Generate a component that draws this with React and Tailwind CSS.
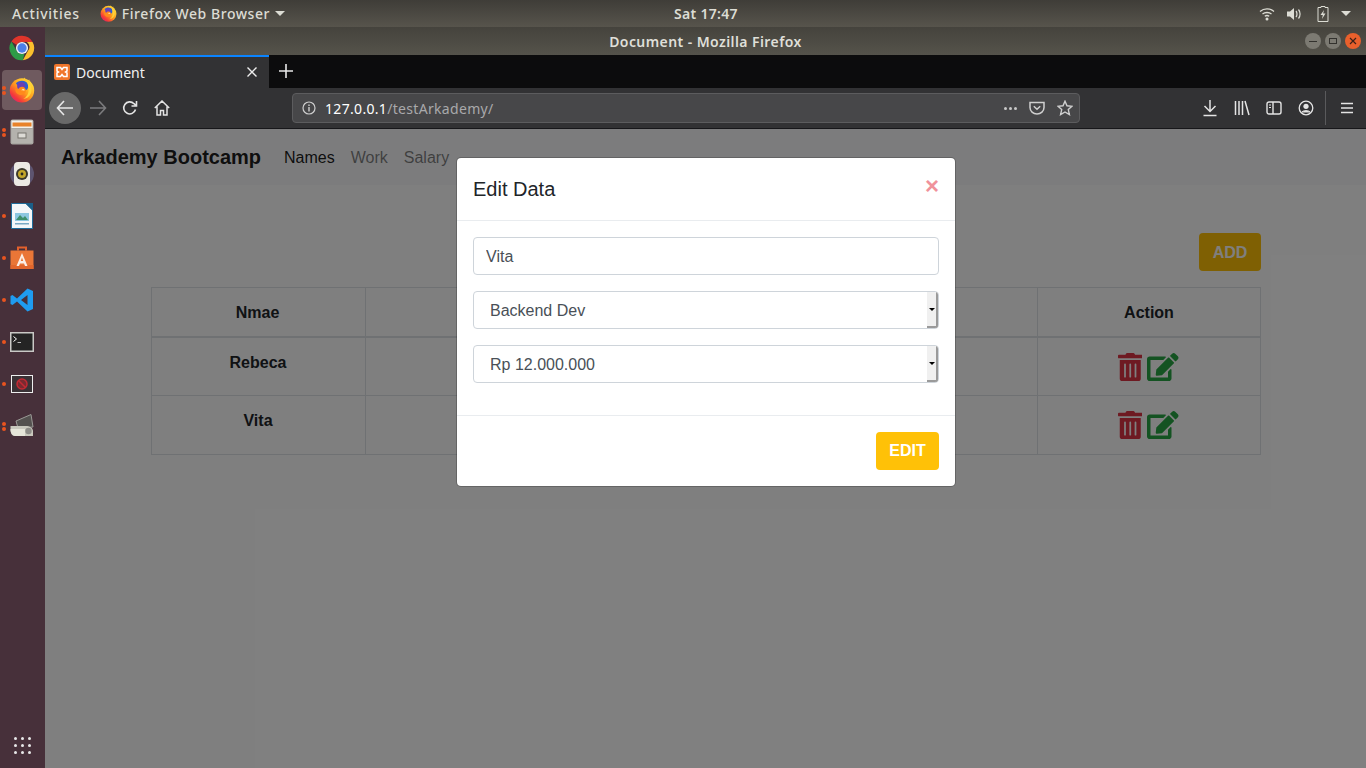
import React from "react";
import { FaTrashAlt, FaEdit } from "react-icons/fa";

const people = ["Rebeca", "Vita"];

// Small firefox logo, used in the top bar and in the dock
const FirefoxLogo = ({ size }) => (
    <svg width={size} height={size} viewBox="0 0 32 32">
        <defs>
            <linearGradient id="foxOuter" x1="0.85" y1="0.1" x2="0.15" y2="0.9">
                <stop offset="0" stopColor="#ffe03a" />
                <stop offset="0.5" stopColor="#ff9a1c" />
                <stop offset="0.85" stopColor="#f5383a" />
                <stop offset="1" stopColor="#e0256a" />
            </linearGradient>
        </defs>
        <circle cx="16" cy="16.500" r="15" fill="url(#foxOuter)" />
        <path d="M19 0.500C17.500 3 18 5 19.500 6.500L25 3 25 9Z" fill="#ffc52e" />
        <path d="M8.500 8C11 4.500 17 3.500 21 6 24.500 8.500 24.500 13.500 21.500 16L14 14Z" fill="#2d5fd0" />
        <circle cx="15" cy="11" r="5" fill="#6a3fb5" />
        <path d="M13 13C15.500 11.500 18 12 19.500 13.500 21.500 15.500 21 19 18.500 21 16 23 12 22.500 9.500 20 8 18.500 7.500 16 8 14 9.500 15.500 11.500 15.500 13 13Z" fill="#ff8a1c" />
        <path d="M17 14.500C18.500 14.500 19.500 15.500 19 17 18 16.500 17 16 15 16.500Z" fill="#ffe9a8" />
        <path d="M22 5C26.500 8 28.500 13 27.500 18 26.500 23 22.500 26.500 17.500 27 22 24.500 24.500 20 24 15 23.700 11 23 8 22 5Z" fill="#ffd23a" />
    </svg>
);

const ChromeLogo = () => (
    <svg width="26" height="26" viewBox="0 0 32 32">
        <path d="M16 1A15 15 0 0 1 29 8.500H16A7.500 7.500 0 0 0 9.500 12.200L3 8A15 15 0 0 1 16 1Z" fill="#e0352b" />
        <path d="M29 8.500A15 15 0 0 1 17 31L23 20A7.500 7.500 0 0 0 22 8.500Z" fill="#fbc02d" />
        <path d="M3 8L9.500 19.800A7.500 7.500 0 0 0 19 22.800L17 31A15 15 0 0 1 3 8Z" fill="#2e9b47" />
        <circle cx="16" cy="16" r="7.500" fill="#eef1f6" />
        <circle cx="16" cy="16" r="5.700" fill="#4c7fe8" />
    </svg>
);

const FilesIcon = () => (
    <svg width="24" height="26" viewBox="0 0 24 26">
        <rect x="0.500" y="0.500" width="23" height="25" rx="2" fill="#a9a7a2" />
        <rect x="1.500" y="1.500" width="21" height="7.500" fill="#f3f1ec" />
        <rect x="2.500" y="3.500" width="19" height="4" fill="#e8822a" />
        <rect x="1.500" y="10" width="21" height="14" fill="#b4b2ad" />
        <rect x="8" y="14" width="8" height="5" fill="#dddbd6" stroke="#77756f" />
    </svg>
);

const SpeakerIcon = () => (
    <svg width="26" height="26" viewBox="0 0 26 26">
        <circle cx="13" cy="13" r="12" fill="#5d5470" />
        <rect x="5" y="1" width="16" height="24" rx="4" fill="#eceae4" />
        <circle cx="13" cy="13" r="6" fill="#3c3a2c" />
        <circle cx="13" cy="13" r="4" fill="#c4a72a" />
        <circle cx="13" cy="13" r="1.400" fill="#2a2a22" />
    </svg>
);

const ImpressIcon = () => (
    <svg width="22" height="26" viewBox="0 0 22 26">
        <path d="M0.500 0.500H15L21.500 7V25.500H0.500Z" fill="#f4f7f9" stroke="#1f6e9c" />
        <path d="M14 0H22V8Z" fill="#1b5f88" />
        <rect x="4" y="10" width="14" height="8" fill="#8cc7e0" />
        <path d="M5 17L9 12 12 15 14 13 17 17Z" fill="#3d8f6a" />
        <rect x="4" y="20" width="14" height="1.500" fill="#79a9c4" />
    </svg>
);

const SoftwareIcon = () => (
    <svg width="24" height="24" viewBox="0 0 24 24">
        <path d="M8 4.500V1.500H16V4.500" fill="none" stroke="#e2602c" strokeWidth="2" />
        <path d="M0.500 4.500H23.500V23H0.500Z" fill="#ea7637" />
        <path d="M0.500 19H23.500V23H0.500Z" fill="#e2662c" />
        <path d="M12 7L17.500 20H15L14 17.500H10L9 20H6.500ZM12 11.500L10.800 15H13.200Z" fill="#fbeee6" fillRule="evenodd" />
    </svg>
);

const VsCodeIcon = () => (
    <svg width="24" height="24" viewBox="0 0 24 24">
        <path d="M17.500 0.500L23 3V21L17.500 23.500 7 13.500 2.500 17 0.500 16V8L2.500 7 7 10.500ZM17.500 7L11 12 17.500 17Z" fill="#1f9cf0" fillRule="evenodd" />
    </svg>
);

const TerminalIcon = () => (
    <svg width="24" height="20" viewBox="0 0 24 20">
        <rect x="0" y="0" width="24" height="20" fill="#c9c9c6" />
        <rect x="1.500" y="1.500" width="21" height="17" fill="#242424" />
        <path d="M3.500 4.500L6.500 7 3.500 9.500" fill="none" stroke="#fff" strokeWidth="1" />
        <path d="M7.500 10.500H11" stroke="#bbb" strokeWidth="1" />
    </svg>
);

const BlockedIcon = () => (
    <svg width="22" height="18" viewBox="0 0 22 18">
        <rect x="0.500" y="0.500" width="21" height="17" fill="#3a3236" stroke="#eee" />
        <circle cx="11" cy="9" r="5" fill="#7a2a30" stroke="#c22a34" strokeWidth="1.500" />
        <path d="M7.500 5.500L14.500 12.500" stroke="#c22a34" strokeWidth="1.500" />
    </svg>
);

const ScannerIcon = () => (
    <svg width="24" height="24" viewBox="0 0 24 24">
        <path d="M6 7L21 0.500 23 13 8 14Z" fill="#54514f" stroke="#9b9a96" />
        <path d="M0.500 12H16C19.500 12 23 14 23 17V22H5C2 22 0.500 19 0.500 16Z" fill="#c9c8bd" />
        <path d="M0.500 15H15V22H5C2.500 22 0.500 19 0.500 15Z" fill="#e6e5d9" />
        <circle cx="18.500" cy="17" r="3.200" fill="#8d8c87" />
    </svg>
);

const dockItems = [
    { icon: <ChromeLogo />, dots: 0 },
    { icon: <FirefoxLogo size={26} />, dots: 2, active: true },
    { icon: <FilesIcon />, dots: 2 },
    { icon: <SpeakerIcon />, dots: 0 },
    { icon: <ImpressIcon />, dots: 1 },
    { icon: <SoftwareIcon />, dots: 1 },
    { icon: <VsCodeIcon />, dots: 1 },
    { icon: <TerminalIcon />, dots: 1 },
    { icon: <BlockedIcon />, dots: 1 },
    { icon: <ScannerIcon />, dots: 2 },
];

function TopBar() {
    return (
        <div className="h-[27px] shrink-0 flex items-center justify-between bg-gradient-to-b from-[#3f3d38] to-[#57544c] text-[#dcdcd4] text-[14px] font-medium font-['Noto_Sans',sans-serif] relative">
            <div className="flex items-center">
                <span className="pl-3 tracking-[0.75px]">Activities</span>
                <span className="ml-5 mr-[5px]"><FirefoxLogo size={17} /></span>
                <span className="tracking-[0.55px]">Firefox Web Browser</span>
                <span className="ml-[5px] border-x-[5px] border-x-transparent border-t-[5px] border-t-[#dcdcd4]"></span>
            </div>
            <span className="absolute left-[674px] font-semibold tracking-[0.3px]">Sat 17:47</span>
            <div className="flex items-center pr-[15px] text-[#dcdcd4]">
                <svg width="16" height="14" viewBox="0 0 16 14" className="mr-[11px]">
                    <path d="M1 4.500C5 1 11 1 15 4.500M3.500 7C6 5 10 5 12.500 7M5.800 9.300C7 8.400 9 8.400 10.200 9.300" fill="none" stroke="currentColor" strokeWidth="1.300" />
                    <circle cx="8" cy="12" r="1.500" fill="currentColor" />
                </svg>
                <svg width="16" height="14" viewBox="0 0 16 14" className="mr-[15px]">
                    <path d="M1 4.500H4L8 1V13L4 9.500H1Z" fill="currentColor" />
                    <path d="M10 4C11.300 5.500 11.300 8.500 10 10M12.500 2.500C14.600 5 14.600 9 12.500 11.500" fill="none" stroke="currentColor" strokeWidth="1.200" />
                </svg>
                <svg width="12" height="16" viewBox="0 0 12 16" className="mr-[12px]">
                    <path d="M4 1.500V0.500H8V1.500H11V15.500H1V1.500Z" fill="none" stroke="currentColor" />
                    <path d="M7 4L3.500 9H5.800L5 13 8.500 7.500H6.200Z" fill="currentColor" />
                </svg>
                <span className="border-x-[5px] border-x-transparent border-t-[5px] border-t-[#dcdcd4]"></span>
            </div>
        </div>
    );
}

function Dock() {
    return (
        <div className="w-[45px] shrink-0 flex flex-col items-center bg-[#47303a] pt-[1px] pr-[1px] pb-[14px]">
            {dockItems.map((item, i) => (
                <div key={i} className={`w-[40px] h-[40px] mb-[2px] relative flex items-center justify-center rounded-[4px] ${item.active ? "bg-[#6f5a5f]" : ""}`}>
                    {item.icon}
                    {item.dots > 0 && (
                        <div className="absolute left-0 top-0 bottom-0 flex flex-col justify-center gap-[1px]">
                            {Array.from({ length: item.dots }).map((_, d) => (
                                <span key={d} className="w-[4px] h-[4px] rounded-full bg-[#e9541f]"></span>
                            ))}
                        </div>
                    )}
                </div>
            ))}
            <div className="mt-auto grid grid-cols-3 gap-[4px]">
                {Array.from({ length: 9 }).map((_, i) => (
                    <span key={i} className="w-[3px] h-[3px] rounded-full bg-[#e8e8e8]"></span>
                ))}
            </div>
        </div>
    );
}

function WindowButtons() {
    return (
        <div className="absolute right-[5px] top-[6px] flex gap-[4px]">
            <span className="w-[16px] h-[16px] rounded-full bg-[#7c7a72] flex items-center justify-center">
                <span className="w-[8px] h-[1px] bg-[#33322e]"></span>
            </span>
            <span className="w-[16px] h-[16px] rounded-full bg-[#7c7a72] flex items-center justify-center">
                <span className="w-[8px] h-[6px] border border-[#33322e]"></span>
            </span>
            <span className="w-[16px] h-[16px] rounded-full bg-[#e9602c] flex items-center justify-center">
                <svg width="8" height="8" viewBox="0 0 8 8"><path d="M1 1L7 7M7 1L1 7" stroke="#3a2018" strokeWidth="1.200" /></svg>
            </span>
        </div>
    );
}

function BrowserChrome() {
    return (
        <div className="shrink-0 font-['Noto_Sans',sans-serif]">
            <div className="h-[28px] relative flex items-center justify-center bg-gradient-to-b from-[#45433d] to-[#55534b] text-[#dfdfd8] text-[14px] font-semibold tracking-[0.42px]">
                Document - Mozilla Firefox
                <WindowButtons />
            </div>
            <div className="h-[33px] flex bg-[#0c0c0d] text-white">
                <div className="w-[224px] flex items-center bg-[#323234] border-t-2 border-[#0a84ff] pl-[9px] pr-[11px] pb-[1px]">
                    <span className="w-[16px] h-[16px] rounded-[2px] bg-[#f0762b] flex items-center justify-center">
                        <svg width="12" height="12" viewBox="0 0 12 12">
                            <path d="M1 1.500H4.500L6 3.500 7.500 1.500H11V5L9.500 6 11 7V10.500H7.500L6 8.500 4.500 10.500H1V7L2.500 6 1 5Z" fill="none" stroke="#fff" strokeWidth="1.500" />
                        </svg>
                    </span>
                    <span className="ml-[6px] text-[14px] text-[#f0f0f0] flex-1">Document</span>
                    <svg width="12" height="12" viewBox="0 0 12 12"><path d="M1.500 1.500L10.500 10.500M10.500 1.500L1.500 10.500" stroke="#eee" strokeWidth="1.400" /></svg>
                </div>
                <div className="w-[34px] pb-[2px] flex items-center justify-center">
                    <svg width="14" height="14" viewBox="0 0 14 14"><path d="M7 0V14M0 7H14" stroke="#e8e8e8" strokeWidth="1.600" /></svg>
                </div>
            </div>
            <div className="h-[41px] flex items-center bg-[#323234] border-b border-[#17171a] text-[#e4e4e4]">
                <div className="w-[32px] h-[32px] ml-[4px] rounded-full bg-[#696969] flex items-center justify-center">
                    <svg width="18" height="16" viewBox="0 0 18 16"><path d="M1.500 8H17M8 1L1.500 8 8 15" fill="none" stroke="#e8e8e8" strokeWidth="1.600" /></svg>
                </div>
                <svg width="18" height="16" viewBox="0 0 18 16" className="ml-[8px]"><path d="M1 8H16.500M10 1L16.500 8 10 15" fill="none" stroke="#7b7b7d" strokeWidth="1.600" /></svg>
                <svg width="16" height="16" viewBox="0 0 16 16" className="ml-[15px]"><path d="M13.500 9.500A6 6 0 1 1 12 3.700L14.500 5.800M14.500 1V6H9.500" fill="none" stroke="currentColor" strokeWidth="1.600" /></svg>
                <svg width="16" height="16" viewBox="0 0 16 16" className="ml-[16px]"><path d="M0.800 8L8 1 15.200 8M3 6.500V15H6.500V10.500H9.500V15H13V6.500" fill="none" stroke="currentColor" strokeWidth="1.500" /></svg>
                <div className="w-[788px] h-[30px] ml-[122px] flex items-center bg-[#474749] border border-[#5c5c5e] rounded-[4px] pl-[9px] pr-[6px]">
                    <svg width="14" height="14" viewBox="0 0 14 14"><circle cx="7" cy="7" r="6" fill="none" stroke="#cfcfcf" strokeWidth="1.200" /><path d="M7 6V10.500M7 3.500V5" stroke="#cfcfcf" strokeWidth="1.400" /></svg>
                    <span className="ml-[9px] text-[14px] flex-1 text-white tracking-[0.32px]">127.0.0.1<span className="text-[#a9a9ab]">/testArkademy/</span></span>
                    <div className="flex gap-[2px] mr-[12px]">
                        <span className="w-[3px] h-[3px] rounded-full bg-[#c8c8c8]"></span>
                        <span className="w-[3px] h-[3px] rounded-full bg-[#c8c8c8]"></span>
                        <span className="w-[3px] h-[3px] rounded-full bg-[#c8c8c8]"></span>
                    </div>
                    <svg width="16" height="16" viewBox="0 0 16 16" className="mr-[12px]"><path d="M1 2.500H15V7.500A7 6.500 0 0 1 1 7.500ZM4.800 6.200L8 9.300 11.200 6.200" fill="none" stroke="#d0d0d0" strokeWidth="1.500" /></svg>
                    <svg width="16" height="16" viewBox="0 0 16 16"><path d="M8 1.200L10 5.800 15 6.300 11.300 9.600 12.400 14.600 8 12 3.600 14.600 4.700 9.600 1 6.300 6 5.800Z" fill="none" stroke="#d0d0d0" strokeWidth="1.400" /></svg>
                </div>
                <svg width="16" height="18" viewBox="0 0 16 18" className="ml-[122px]"><path d="M8 1V12M2.500 7L8 12.500 13.500 7M1.500 16.500H14.500" fill="none" stroke="currentColor" strokeWidth="1.500" /></svg>
                <svg width="16" height="16" viewBox="0 0 16 16" className="ml-[16px]"><path d="M1.500 1V15M5 1V15M8.500 1V15M11 1L15 15" fill="none" stroke="currentColor" strokeWidth="1.500" /></svg>
                <svg width="16" height="14" viewBox="0 0 16 14" className="ml-[16px]"><rect x="1" y="1" width="14" height="12" rx="2" fill="none" stroke="currentColor" strokeWidth="1.400" /><path d="M7 1V13" stroke="currentColor" strokeWidth="1.400" /><path d="M3 4H5M3 6.500H5" stroke="currentColor" /></svg>
                <svg width="16" height="16" viewBox="0 0 16 16" className="ml-[16px]"><circle cx="8" cy="8" r="6.800" fill="none" stroke="currentColor" strokeWidth="1.300" /><circle cx="8" cy="6.300" r="2.600" fill="currentColor" /><path d="M3.500 12.500C4.500 10 11.500 10 12.500 12.500" fill="currentColor" stroke="currentColor" /></svg>
                <span className="w-px h-[34px] ml-[11px] bg-[#5a5a5c]"></span>
                <svg width="14" height="12" viewBox="0 0 14 12" className="ml-[14px]"><path d="M1 1.500H13M1 6H13M1 10.500H13" stroke="currentColor" strokeWidth="1.600" /></svg>
            </div>
        </div>
    );
}

function Page() {
    return (
        <div className="flex-1 bg-white font-['Liberation_Sans',sans-serif] text-[#212529] text-[16px]">
            <nav className="h-[56px] flex items-center bg-[#f8f9fa] px-4">
                <span className="text-[20px] font-bold mr-[15px] text-black/90">Arkademy Bootcamp</span>
                <span className="px-2 pt-[1px] text-black/90">Names</span>
                <span className="px-2 pt-[1px] text-black/50">Work</span>
                <span className="px-2 pt-[1px] text-black/50">Salary</span>
            </nav>
            <div className="w-[1110px] ml-[106px]">
                <div className="flex justify-end pt-[48px] pb-[16px]">
                    <button className="h-[38px] w-[62px] pt-[1px] rounded-[4px] bg-[#ffc107] text-white font-bold">ADD</button>
                </div>
                <table className="w-full table-fixed border-collapse text-center">
                    <thead>
                        <tr className="h-[49px]">
                            <th className="w-[214px] pt-[2px] pr-[2px] border border-[#dee2e6] border-b-2">Nmae</th>
                            <th className="border border-[#dee2e6] border-b-2">Work</th>
                            <th className="w-[223px] pt-[2px] border border-[#dee2e6] border-b-2">Action</th>
                        </tr>
                    </thead>
                    <tbody>
                        {people.map((name) => (
                            <tr key={name} className="h-[59px]">
                                <td className="border border-[#dee2e6] font-bold align-top pt-[13px] pr-[1px]">{name}</td>
                                <td className="border border-[#dee2e6]"></td>
                                <td className="border border-[#dee2e6] align-top pt-[15px] pr-[2px]">
                                    <div className="flex justify-center items-center gap-[5px]">
                                        <FaTrashAlt className="w-[24.5px] h-[28px] text-[#dc3545]" />
                                        <FaEdit className="w-[31.5px] h-[28px] text-[#28a745]" />
                                    </div>
                                </td>
                            </tr>
                        ))}
                    </tbody>
                </table>
            </div>
        </div>
    );
}

function FakeSelect({ value }) {
    return (
        <div className="h-[38px] flex border border-[#ced4da] rounded-[4px] bg-white text-[#495057] overflow-hidden">
            <span className="flex-1 pl-4 leading-[38px]">{value}</span>
            <span className="w-[11px] bg-[#f0f0f0] border-r-2 border-b-2 border-[#9a9a9a] flex items-center justify-center">
                <span className="border-x-[3px] border-x-transparent border-t-[3px] border-t-black"></span>
            </span>
        </div>
    );
}

function EditModal() {
    return (
        <div className="absolute left-[456px] top-[157px] w-[500px] bg-white rounded-[5px] border border-black/20 bg-clip-padding font-['Liberation_Sans',sans-serif] text-[16px]">
            <div className="h-[63px] flex justify-between pl-4 pr-4 pt-4 border-b border-[#e9ecef]">
                <h5 className="text-[20px] leading-[30px] text-[#212529]">Edit Data</h5>
                <span className="text-[24px] leading-[24px] font-bold text-[#f0929b]">×</span>
            </div>
            <div className="px-4 pt-4 pb-[32px] flex flex-col gap-4">
                <input readOnly defaultValue="Vita" className="h-[38px] px-3 pt-[2px] border border-[#ced4da] rounded-[4px] text-[#495057] outline-none" />
                <FakeSelect value="Backend Dev" />
                <FakeSelect value="Rp 12.000.000" />
            </div>
            <div className="flex justify-end p-4 border-t border-[#e9ecef]">
                <button className="h-[38px] w-[63px] rounded-[4px] bg-[#ffc107] text-white font-bold">EDIT</button>
            </div>
        </div>
    );
}

export default function App() {
    return (
        <div className="w-[1366px] h-[768px] relative flex flex-col overflow-hidden">
            <TopBar />
            <div className="flex-1 flex min-h-0">
                <Dock />
                <div className="flex-1 flex flex-col min-w-0">
                    <BrowserChrome />
                    <Page />
                </div>
            </div>
            {/* backdrop only covers the page, not the browser toolbar */}
            <div className="absolute left-[45px] right-0 top-[129px] bottom-0 bg-black/50"></div>
            <EditModal />
        </div>
    );
}
